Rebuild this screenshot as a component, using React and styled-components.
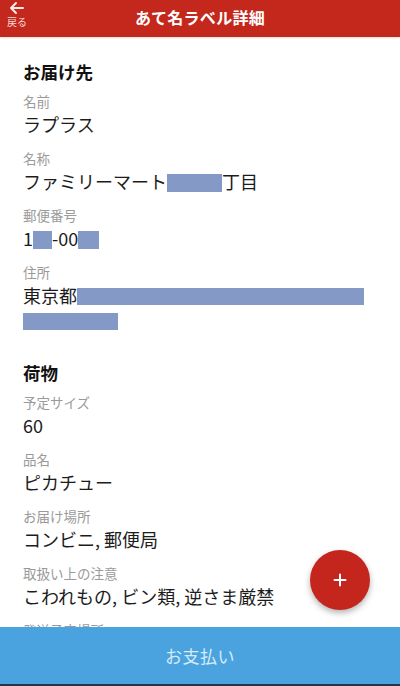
import React from 'react';
import styled, { createGlobalStyle } from 'styled-components';

const GlobalStyle = createGlobalStyle`
  html, body { margin: 0; padding: 0; background: #fff; }
  body { font-family: "Noto Sans CJK JP", "Noto Sans", sans-serif; }
`;

const Screen = styled.div`
  position: relative;
  width: 400px;
  height: 686px;
  overflow: hidden;
  display: flex;
  flex-direction: column;
  background: #fff;
`;

const Header = styled.header`
  height: 37px;
  flex-shrink: 0;
  background: #c4281d;
  display: flex;
  align-items: center;
  justify-content: center;
  position: relative;
  box-shadow: 0 1px 2px rgba(0, 0, 0, 0.15);
`;

const Back = styled.button`
  position: absolute;
  left: 4px;
  top: 1px;
  border: 0;
  background: none;
  padding: 0;
  width: 26px;
  display: flex;
  flex-direction: column;
  align-items: center;
  color: #f6d8d4;
  font-family: inherit;
  font-size: 10px;
  line-height: 12px;
  gap: 1px;
`;

const Title = styled.h1`
  margin: 0;
  color: #fff;
  font-size: 16px;
  font-weight: 700;
  letter-spacing: 0.3px;
  margin-top: -4px;
`;

const Content = styled.main`
  flex: 1;
  overflow: hidden;
  padding: 23px 23px 0;
`;

const Section = styled.section`
  margin-bottom: 28px;
`;

const Heading = styled.h2`
  margin: 0 0 8px;
  font-size: 17.5px;
  line-height: 24px;
  font-weight: 700;
  color: #111;
`;

const Field = styled.div`
  margin-bottom: 13px;
`;

const Label = styled.div`
  font-size: 13.5px;
  line-height: 18px;
  color: #9a9a9a;
  margin-bottom: 2px;
`;

const Value = styled.div`
  font-size: 18px;
  line-height: ${p => p.$lh || 24}px;
  color: #1c1c1c;
  white-space: nowrap;
`;

const Redact = styled.span`
  display: inline-block;
  vertical-align: middle;
  width: ${p => p.$w}px;
  height: ${p => p.$h || 18}px;
  background: #8499c6;
  margin-top: -3px;
`;

const Footer = styled.button`
  flex-shrink: 0;
  height: 59px;
  border: 0;
  border-bottom: 2px solid #23364a;
  background: #4aa3df;
  color: #d6ebf8;
  font-family: inherit;
  font-size: 17px;
  letter-spacing: 0.5px;
  z-index: 1;
`;

const Fab = styled.button`
  position: absolute;
  left: 310px;
  top: 550px;
  width: 60px;
  height: 60px;
  border-radius: 50%;
  border: 0;
  background: #c4261d;
  box-shadow: 0 3px 6px rgba(0, 0, 0, 0.3);
  display: flex;
  align-items: center;
  justify-content: center;
  z-index: 2;
`;

const ArrowIcon = () => (
  <svg width="16" height="14" viewBox="0 0 16 14" fill="none" stroke="#fbe9e7" strokeWidth="2" strokeLinecap="round" strokeLinejoin="round">
    <path d="M14 7H2M7 2L2 7l5 5" />
  </svg>
);

const PlusIcon = () => (
  <svg width="14" height="14" viewBox="0 0 14 14" stroke="#fff" strokeWidth="2" strokeLinecap="round">
    <path d="M7 1.5v11M1.5 7h11" />
  </svg>
);

export default function App() {
  return (
    <Screen>
      <GlobalStyle />
      <Header>
        <Back>
          <ArrowIcon />
          戻る
        </Back>
        <Title>あて名ラベル詳細</Title>
      </Header>
      <Content>
        <Section>
          <Heading>お届け先</Heading>
          <Field>
            <Label>名前</Label>
            <Value>ラプラス</Value>
          </Field>
          <Field>
            <Label>名称</Label>
            <Value>ファミリーマート<Redact $w={55} />丁目</Value>
          </Field>
          <Field>
            <Label>郵便番号</Label>
            <Value>1<Redact $w={19} />-00<Redact $w={21} /></Value>
          </Field>
          <Field>
            <Label>住所</Label>
            <Value $lh={25}>
              東京都<Redact $w={287} $h={17} />
              <br />
              <Redact $w={95} $h={17} />
            </Value>
          </Field>
        </Section>
        <Section>
          <Heading>荷物</Heading>
          <Field>
            <Label>予定サイズ</Label>
            <Value>60</Value>
          </Field>
          <Field>
            <Label>品名</Label>
            <Value>ピカチュー</Value>
          </Field>
          <Field>
            <Label>お届け場所</Label>
            <Value>コンビニ, 郵便局</Value>
          </Field>
          <Field>
            <Label>取扱い上の注意</Label>
            <Value>こわれもの, ビン類, 逆さま厳禁</Value>
          </Field>
          <Field>
            <Label>発送予定場所</Label>
            <Value>コンビニ</Value>
          </Field>
        </Section>
      </Content>
      <Footer>お支払い</Footer>
      <Fab aria-label="追加">
        <PlusIcon />
      </Fab>
    </Screen>
  );
}
